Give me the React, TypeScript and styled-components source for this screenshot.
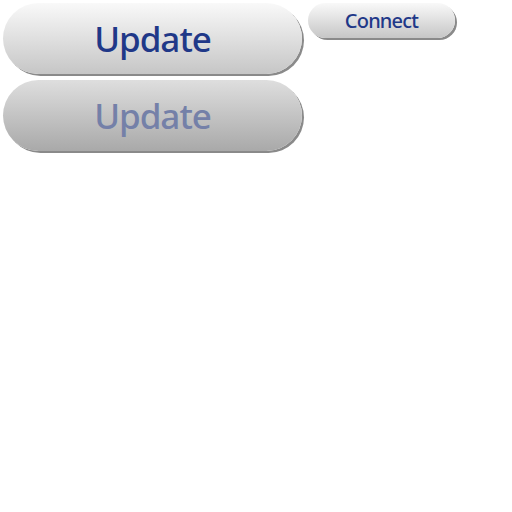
import React from "react";
import styled, { createGlobalStyle } from "styled-components";

const Global = createGlobalStyle`
  html, body { margin: 0; padding: 0; background: #ffffff; }
  body { font-family: "Noto Sans", sans-serif; }
`;

const Page = styled.div`
  display: flex;
  align-items: flex-start;
`;

const Column = styled.div`
  display: flex;
  flex-direction: column;
`;

const Button = styled.button<{ $size: "large" | "small"; $disabled?: boolean }>`
  margin: 3px;
  padding: 0;
  border: none;
  border-radius: 999px;
  width: ${(p) => (p.$size === "large" ? "299px" : "147px")};
  height: ${(p) => (p.$size === "large" ? "71px" : "35px")};
  background: ${(p) =>
    p.$disabled
      ? "linear-gradient(#dedede, #a9a9a9)"
      : "linear-gradient(#f9f9f9, #c6c6c6)"};
  box-shadow: 2px 2px 0 0 #8a8a8a;
  font-family: "Noto Sans", sans-serif;
  font-weight: 500;
  font-size: ${(p) => (p.$size === "large" ? "35px" : "20px")};
  letter-spacing: ${(p) => (p.$size === "large" ? "-1px" : "-0.8px")};
  color: ${(p) => (p.$disabled ? "#7480a8" : "#1f3888")};
  display: flex;
  align-items: center;
  justify-content: center;
  cursor: pointer;
`;

export default function App() {
  return (
    <>
      <Global />
      <Page>
        <Column>
          <Button $size="large">Update</Button>
          <Button $size="large" $disabled>
            Update
          </Button>
        </Column>
        <Button $size="small">Connect</Button>
      </Page>
    </>
  );
}
